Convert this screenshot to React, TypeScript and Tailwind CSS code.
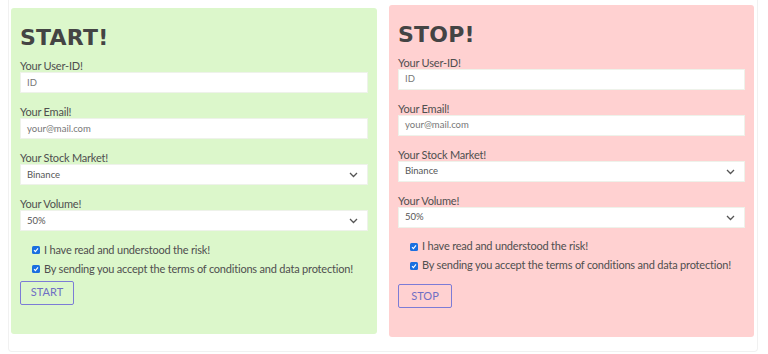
import React from 'react';

const body = { fontFamily: 'Lato, "Open Sans", sans-serif' };

function Chevron() {
  return (
    <svg width="9" height="6" viewBox="0 0 9 6" className="shrink-0">
      <polyline points="1,1 4.5,4.5 8,1" fill="none" stroke="#555" strokeWidth="1.3" />
    </svg>
  );
}

function Field({ label, value, select }: { label: string; value: string; select?: boolean }) {
  return (
    <div className="mb-3">
      <div className="text-[11px] leading-[13px] tracking-[-0.2px] text-[#4f4f4f]">{label}</div>
      <div className="h-[21px] bg-white border border-[#eef2ea] flex items-center justify-between px-[6px]">
        <span className={select ? 'text-[9.5px] text-[#555]' : 'text-[9.5px] text-[#777]'}>{value}</span>
        {select && <span className="pr-[3px]"><Chevron /></span>}
      </div>
    </div>
  );
}

function Check({ text }: { text: string }) {
  return (
    <div className="flex items-center gap-[4px] h-[19px] pl-3">
      <span className="w-[8px] h-[8px] rounded-[1.5px] bg-[#1a6fe0] flex items-center justify-center">
        <svg width="6" height="6" viewBox="0 0 6 6">
          <polyline points="1,3.2 2.4,4.6 5,1.4" fill="none" stroke="#fff" strokeWidth="1.1" />
        </svg>
      </span>
      <span className="text-[11px] tracking-[-0.2px] text-[#4f4f4f] whitespace-nowrap">{text}</span>
    </div>
  );
}

function Panel({ title, action, bg, btnGap }: { title: string; action: string; bg: string; btnGap: string }) {
  return (
    <div className={`${bg} rounded-[3px] px-[9px] pt-[16px] pb-[29px]`}>
      <h1
        className="text-[22px] leading-[28px] font-bold tracking-[0.2px] text-[#444] mb-[7px]"
        style={{ fontFamily: '"DejaVu Sans", sans-serif' }}
      >
        {title}
      </h1>
      <Field label="Your User-ID!" value="ID" />
      <Field label="Your Email!" value="your@mail.com" />
      <Field label="Your Stock Market!" value="Binance" select />
      <Field label="Your Volume!" value="50%" select />
      <div className="-mt-[3px]">
        <Check text="I have read and understood the risk!" />
        <Check text="By sending you accept the terms of conditions and data protection!" />
      </div>
      <button
        className={`${btnGap} h-[24px] w-[54px] border-[1.5px] border-[#7c7cd6] rounded-[2px] text-[11px] text-[#6f6fc4] bg-transparent`}
      >
        {action}
      </button>
    </div>
  );
}

export default function App() {
  return (
    <div className="min-h-screen bg-white" style={body}>
      <div className="mx-[8px] w-[750px] border-x border-b border-[#f1f1f1] rounded-b-[4px] px-[2px] pt-[5px] pb-[14px]">
        <div className="flex items-center gap-[12px]">
          <div className="w-[366px]">
            <Panel title="START!" action="START" bg="bg-[#dcf7cb]" btnGap="mt-[1px]" />
          </div>
          <div className="w-[365px]">
            <Panel title="STOP!" action="STOP" bg="bg-[#ffd1d1]" btnGap="mt-[9px]" />
          </div>
        </div>
      </div>
    </div>
  );
}
